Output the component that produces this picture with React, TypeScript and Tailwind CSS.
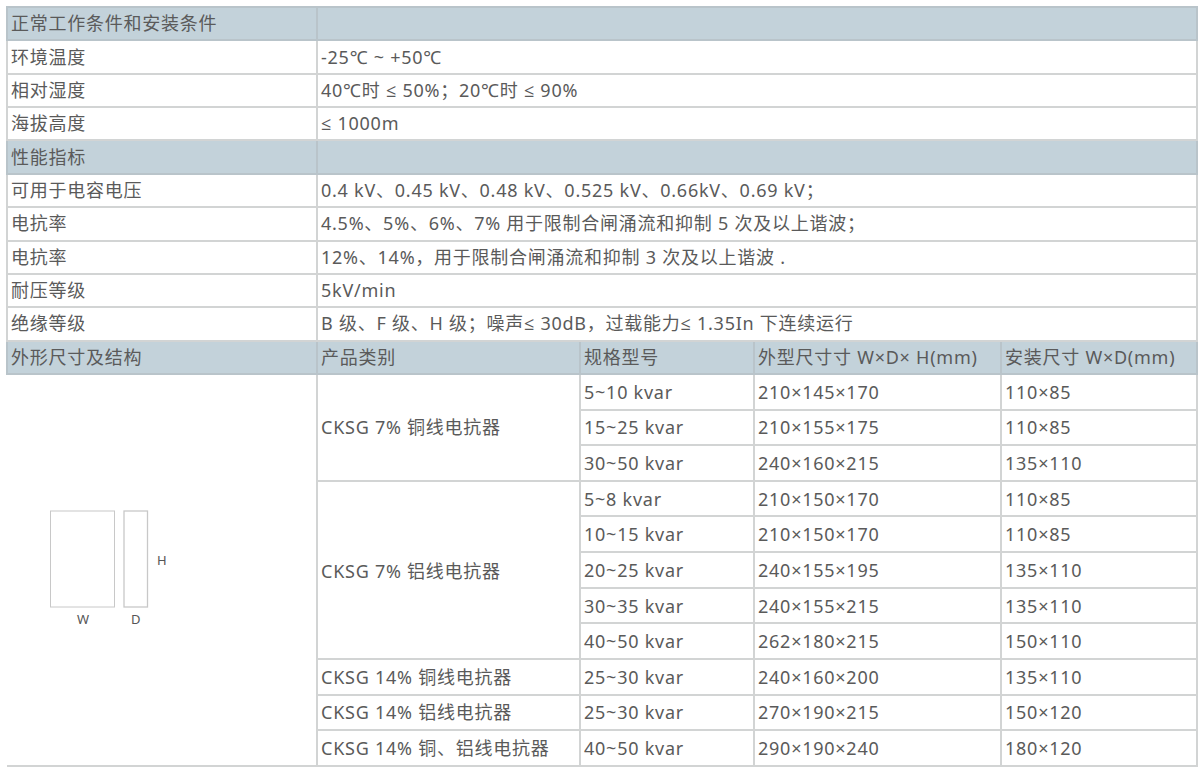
import React from 'react';

const cell = 'border-2 border-[#d2d4d4] px-[3px] py-0 align-middle';
const head = 'border-2 border-[#b9c4ca] bg-[#c3d2da] px-[3px] py-0 align-middle';

const specRows = [
  { label: '正常工作条件和安装条件', value: '', isHead: true },
  { label: '环境温度', value: '-25℃ ~ +50℃' },
  { label: '相对湿度', value: '40℃时 ≤ 50%；20℃时 ≤ 90%' },
  { label: '海拔高度', value: '≤ 1000m' },
  { label: '性能指标', value: '', isHead: true },
  { label: '可用于电容电压', value: '0.4 kV、0.45 kV、0.48 kV、0.525 kV、0.66kV、0.69 kV；' },
  { label: '电抗率', value: '4.5%、5%、6%、7% 用于限制合闸涌流和抑制 5 次及以上谐波；' },
  { label: '电抗率', value: '12%、14%，用于限制合闸涌流和抑制 3 次及以上谐波 .' },
  { label: '耐压等级', value: '5kV/min' },
  { label: '绝缘等级', value: 'B 级、F 级、H 级；噪声≤ 30dB，过载能力≤ 1.35In 下连续运行' },
];

const sizeRows = [
  { type: 'CKSG 7% 铜线电抗器', span: 3, model: '5~10 kvar', size: '210×145×170', mount: '110×85' },
  { model: '15~25 kvar', size: '210×155×175', mount: '110×85' },
  { model: '30~50 kvar', size: '240×160×215', mount: '135×110' },
  { type: 'CKSG 7% 铝线电抗器', span: 5, model: '5~8 kvar', size: '210×150×170', mount: '110×85' },
  { model: '10~15 kvar', size: '210×150×170', mount: '110×85' },
  { model: '20~25 kvar', size: '240×155×195', mount: '135×110' },
  { model: '30~35 kvar', size: '240×155×215', mount: '135×110' },
  { model: '40~50 kvar', size: '262×180×215', mount: '150×110' },
  { type: 'CKSG 14% 铜线电抗器', span: 1, model: '25~30 kvar', size: '240×160×200', mount: '135×110' },
  { type: 'CKSG 14% 铝线电抗器', span: 1, model: '25~30 kvar', size: '270×190×215', mount: '150×120' },
  { type: 'CKSG 14% 铜、铝线电抗器', span: 1, model: '40~50 kvar', size: '290×190×240', mount: '180×120' },
];

function Diagram() {
  return (
    <svg width="130" height="124" viewBox="0 0 130 124" className="ml-[43px] mb-[-4px]">
      <rect x="0.5" y="1" width="64" height="96" fill="none" stroke="#c8c8c8" strokeWidth="1" />
      <rect x="74" y="1" width="23.5" height="96" fill="none" stroke="#c8c8c8" strokeWidth="1.3" />
      <text x="107" y="55" fontSize="13" letterSpacing="0" fill="#555">H</text>
      <text x="27" y="114" fontSize="13" letterSpacing="0" fill="#555">W</text>
      <text x="81" y="114" fontSize="13" letterSpacing="0" fill="#555">D</text>
    </svg>
  );
}

export default function App() {
  return (
    <div className="w-[1200px] h-[774px] bg-white pt-[6px] pl-[6px] overflow-hidden text-[#5a5a5a] text-[18px] tracking-[0.75px] font-['Noto_Sans','Open_Sans','Noto_Sans_CJK_SC',sans-serif]">
      <table className="w-[1190px] table-fixed border-collapse">
        <colgroup>
          <col className="w-[310px]" />
          <col className="w-[263px]" />
          <col className="w-[174px]" />
          <col className="w-[247px]" />
          <col className="w-[196px]" />
        </colgroup>
        <tbody>
          {specRows.map((row, i) => (
            <tr key={i} className="h-[33.36px]">
              <td className={row.isHead ? head : cell}>{row.label}</td>
              <td colSpan={4} className={(row.isHead ? head : cell) + ' whitespace-nowrap'}>{row.value}</td>
            </tr>
          ))}
          <tr className="h-[33.36px]">
            <td className={head}>外形尺寸及结构</td>
            <td className={head}>产品类别</td>
            <td className={head}>规格型号</td>
            <td className={head + ' whitespace-nowrap'}>外型尺寸寸 W×D× H(mm)</td>
            <td className={head + ' whitespace-nowrap'}>安装尺寸 W×D(mm)</td>
          </tr>
          {sizeRows.map((row, i) => (
            <tr key={i} className="h-[35.64px]">
              {i === 0 && (
                <td rowSpan={11} className="border-b-2 border-r-2 border-[#d2d4d4] p-0 align-middle">
                  <Diagram />
                </td>
              )}
              {row.type && (
                <td rowSpan={row.span} className={cell + (row.span === 5 ? ' !pt-[3px]' : ' !pt-[1px]') + ' whitespace-nowrap'}>{row.type}</td>
              )}
              <td className={cell + ' !pt-[1px]'}>{row.model}</td>
              <td className={cell + ' !pt-[1px]'}>{row.size}</td>
              <td className={cell + ' !pt-[1px]'}>{row.mount}</td>
            </tr>
          ))}
        </tbody>
      </table>
    </div>
  );
}
